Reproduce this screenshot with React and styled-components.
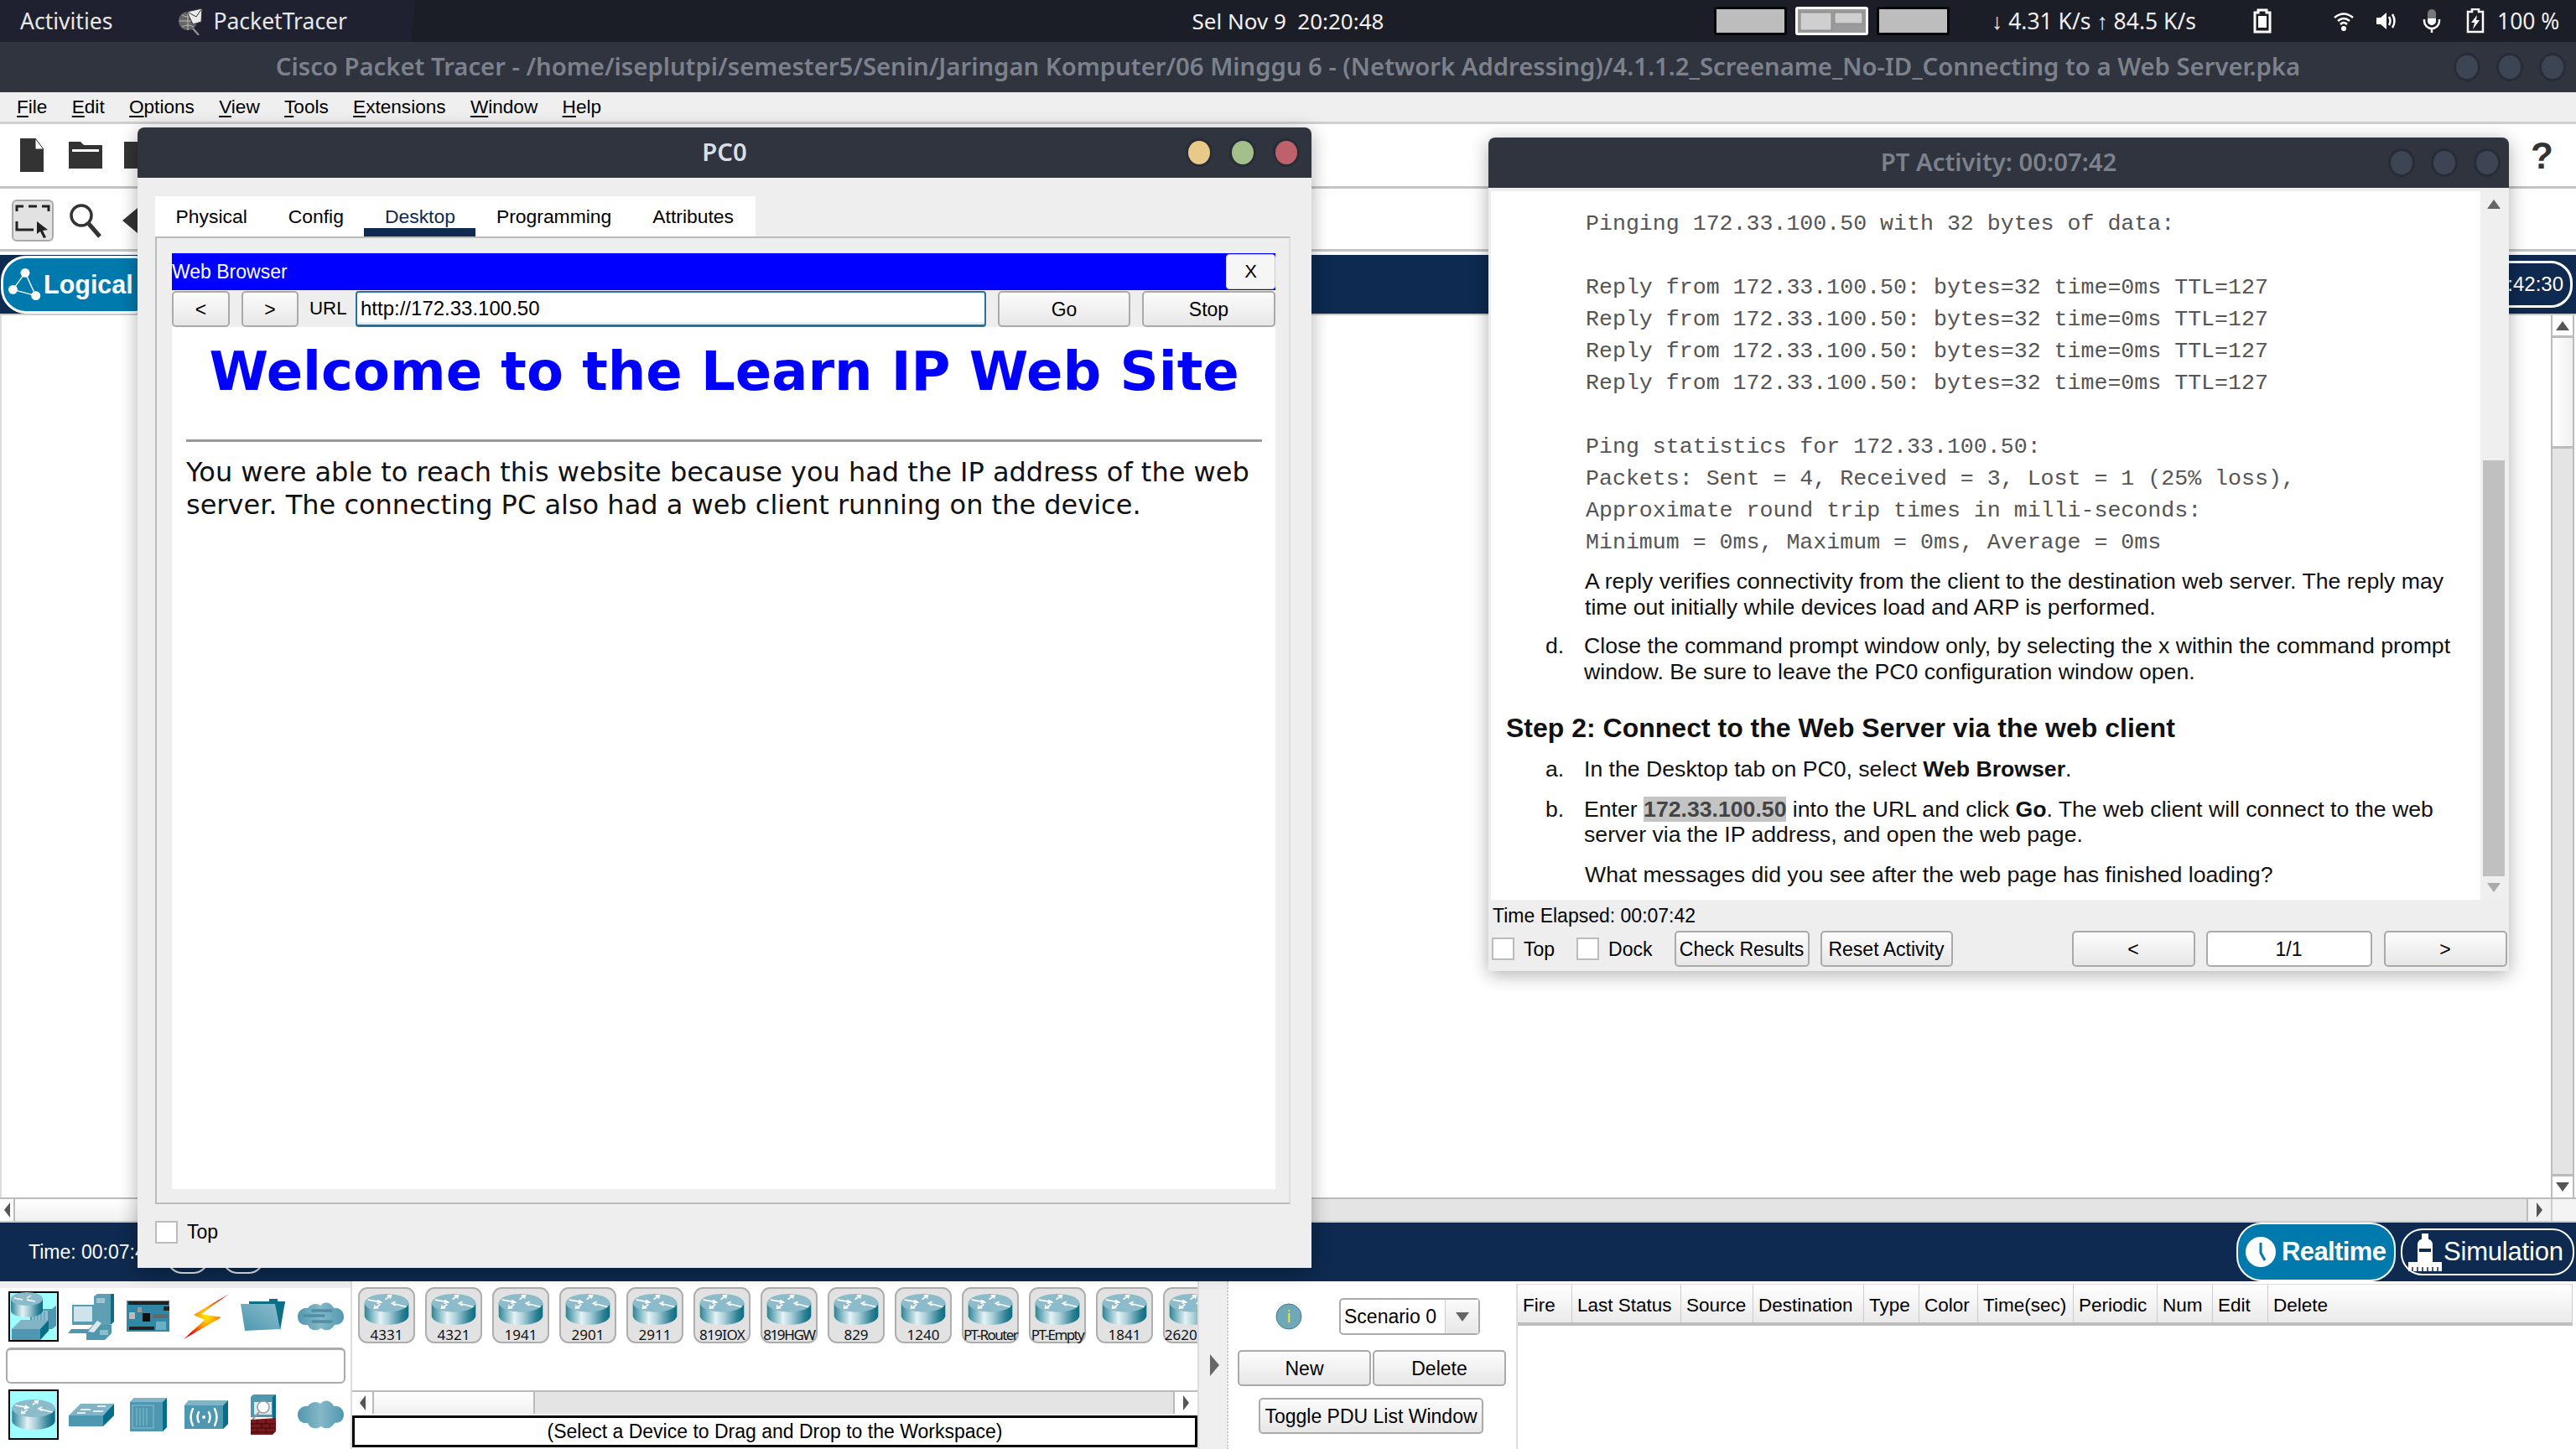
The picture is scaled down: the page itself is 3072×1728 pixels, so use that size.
import React from "react";
import styled, { createGlobalStyle } from "styled-components";

const Global = createGlobalStyle`
  html, body { margin: 0; padding: 0; background: #fff; }
  * { box-sizing: border-box; }
  body { font-family: "Liberation Sans", Arial, sans-serif; color: #000; }
`;

const Page = styled.div`
  position: relative; width: 3072px; height: 1728px; overflow: hidden;
  display: flex; flex-direction: column; background: #fff;
`;
const HiddenSvg = styled.svg`position: absolute; width: 0; height: 0;`;

/* ---------- GNOME top bar ---------- */
const TopBar = styled.div`
  height: 50px; flex: none; display: flex; align-items: center; position: relative;
  background: linear-gradient(97deg, #1f2130 0 492px, #1b1d27 492px);
  color: #e8e8e8; font-family: "Noto Sans", sans-serif; font-size: 26.5px;
`;
const TopLeft = styled.div`display: flex; align-items: center; padding-left: 24px; width: 1000px;`;
const AppName = styled.span`margin-left: 11px;`;
const AppIcon = styled.svg`margin-left: 77px; flex: none;`;
const Clock = styled.div`
  position: absolute; left: 1402px; width: 268px; text-align: center; color: #f2f2f2; white-space: nowrap; font-size: 26px;
`;
const Tray = styled.div`position: absolute; left: 2044px; top: 0; height: 50px; display: flex; align-items: center;`;
const Workspace = styled.div`
  width: 87px; height: 34px; margin-right: 10px; background: #bdbdbd; border: 3px solid ${p => (p.$active ? "#fff" : "#05060a")};
  border-radius: 3px; flex: none; overflow: hidden; display: block;
`;
const Speed = styled.span`margin-left: 40px; width: 311px; white-space: nowrap; color: #eee;`;
const TrayIcon = styled.svg`flex: none; margin-left: ${p => p.$ml || 0}px;`;
const Battery = styled.span`margin-left: 15px; color: #eee; white-space: nowrap;`;

/* ---------- main window chrome ---------- */
const TitleBar = styled.div`
  height: 60px; flex: none; background: #2f343f; position: relative; display: flex; align-items: center; justify-content: center; padding-bottom: 3px;
  font-family: "Noto Sans", sans-serif; font-weight: 600; font-size: 29.3px; color: ${p => p.$color || "#7c818c"};
  letter-spacing: ${p => p.$ls || 0}px; white-space: nowrap;
`;
const WinButtons = styled.div`
  position: absolute; right: ${p => p.$right}px; top: 16px; display: flex; gap: ${p => p.$gap || 25}px;
`;
const WinDot = styled.span`
  width: ${p => p.$w || 26}px; height: 28px; border-radius: 50%; background: ${p => p.$c || "#3d4454"};
  box-shadow: 0 0 0 3px #282c36; display: block;
`;
const MenuBar = styled.div`
  height: 38px; flex: none; background: #efefef; border-bottom: 3px solid #cfcfcf; display: flex; align-items: center;
  gap: 29.3px; padding: 0 0 0 20px; font-size: 22.6px;
  u { text-decoration-thickness: 2px; text-underline-offset: 3px; }
`;
const ToolRow = styled.div`
  height: ${p => p.$h}px; flex: none; background: #fff; border-bottom: 3px solid #c4c4c4; display: flex; align-items: center; position: relative;
  padding-top: ${p => p.$pt || 0}px;
`;
const ToolIcon = styled.svg`flex: none; margin-left: ${p => p.$ml}px;`;
const Help = styled.span`
  position: absolute; right: 27px; top: 13px; font: bold 44px "Liberation Sans", sans-serif; color: #333;
`;
const NavBar = styled.div`
  height: ${p => p.$h}px; flex: none; background: #0e2a50; display: flex; align-items: center; position: relative; margin-top: ${p => p.$mt || 0}px;
`;
const LogicalPill = styled.div`
  width: 190px; height: 69px; margin-left: 1px; border: 3px solid #fff; border-radius: 30px; background: #0079ad; color: #fff;
  font-weight: bold; font-size: 30.5px; display: flex; align-items: center; padding-left: 6px; gap: 2px;
`;
const ViewPill = styled.div`
  margin-left: auto; margin-right: 4px; width: 120px; height: 56px; border: 3px solid #fff; border-radius: 26px; color: #fff;
  font-size: 24px; display: flex; align-items: center; justify-content: flex-end; padding-right: 8px;
`;

/* ---------- canvas ---------- */
const Canvas = styled.div`
  height: 1084px; flex: none; display: flex; flex-direction: column; border-top: 2px solid #ccc; border-bottom: 2px solid #ccc;
`;
const CanvasRow = styled.div`flex: 1; display: flex; min-height: 0; padding-right: 2px;`;
const Work = styled.div`flex: 1; background: #fff; border-left: 2px solid #ddd;`;
const VScroll = styled.div`width: 28px; display: flex; flex-direction: column; border-left: 2px solid #bbb; border-right: 2px solid #bbb; background: #e4e4e4;`;
const ScrollBtn = styled.div`
  width: ${p => p.$w || "auto"}; height: ${p => p.$h || "auto"}; flex: none; display: flex; align-items: center; justify-content: center;
  background: linear-gradient(90deg, #fff, #f2f2f2); color: #555; font-size: 0;
  ${p => p.$line || ""}
`;
const VThumb = styled.div`height: 132px; flex: none; background: linear-gradient(90deg, #fff, #f0f0f0); border-bottom: 3px solid #bbb;`;
const VTrack = styled.div`flex: 1;`;
const HScroll = styled.div`
  height: ${p => p.$h || 28}px; flex: none; display: flex; background: #e4e4e4; border-top: 2px solid #bbb;
`;
const HThumb = styled.div`width: ${p => p.$w}px; flex: none; background: linear-gradient(#fff, #f0f0f0); border-right: 2px solid #bbb;`;
const Grow = styled.div`flex: 1;`;
const Corner = styled.div`width: 30px; flex: none; background: #f4f4f4; border-left: 2px solid #ccc;`;
const Tri = styled.span`
  width: 0; height: 0; display: block;
  ${p => p.$d === "up" && `border-left: 8px solid transparent; border-right: 8px solid transparent; border-bottom: 11px solid ${p.$c || "#555"};`}
  ${p => p.$d === "down" && `border-left: 8px solid transparent; border-right: 8px solid transparent; border-top: 11px solid ${p.$c || "#555"};`}
  ${p => p.$d === "left" && `border-top: 9px solid transparent; border-bottom: 9px solid transparent; border-right: 7px solid ${p.$c || "#555"};`}
  ${p => p.$d === "right" && `border-top: ${p.$s || 9}px solid transparent; border-bottom: ${p.$s || 9}px solid transparent; border-left: ${p.$s ? p.$s * 0.9 : 7}px solid ${p.$c || "#555"};`}
`;
const TimeText = styled.span`margin-left: 34px; color: #fff; font-size: 23px; white-space: nowrap;`;
const SpeedPill = styled.span`
  width: 52px; height: 40px; border: 2px solid #e6e6e6; border-radius: 20px; flex: none; margin-left: ${p => p.$ml}px; margin-top: 12px; display: block;
`;
const ModeGroup = styled.div`position: absolute; left: 2667px; top: 0; height: 100%; display: flex; align-items: center; gap: 6px;`;
const RealtimePill = styled.div`
  width: 190px; height: 70px; border: 2px solid #fff; border-radius: 30px; background: #0079ad; color: #fff; font-weight: bold; font-size: 31px;
  display: flex; align-items: center; padding-left: 8px; gap: 6px; letter-spacing: -.6px;
`;
const SimPill = styled.div`
  width: 207px; height: 56px; border: 2px solid #fff; border-radius: 26px; color: #fff; font-size: 31px;
  display: flex; align-items: center; padding-left: 6px; gap: 1px; letter-spacing: -.2px;
`;

/* ---------- bottom panels ---------- */
const Bottom = styled.div`flex: 1; display: flex; min-height: 0; background: #fff;`;
const LeftPanel = styled.div`
  width: 420px; flex: none; padding: 12px 0 8px; background: linear-gradient(#efefef 0 8px, #fff 8px); display: flex; flex-direction: column; border-right: 2px solid #ddd;
`;
const IconRow = styled.div`display: grid; grid-template-columns: repeat(6, 68.5px); padding-left: 6px; justify-items: center; align-items: center;`;
const Slot = styled.div`
  width: 60px; height: 60px; display: flex; align-items: center; justify-content: center;
  ${p => p.$sel && "background: #9ffeff; border: 2px solid #000;"}
`;
const NameBox = styled.div`height: 43px; margin: 7px 6px 7px 7px; border: 2px solid #aaa; border-top-width: 3px; border-radius: 6px; background: #fff;`;
const Devices = styled.div`width: 1008px; flex: none; display: flex; flex-direction: column; min-width: 0;`;
const TileRow = styled.div`display: flex; gap: 12px; padding: 7px 0 0 7px; overflow: hidden; flex: 1; align-items: flex-start;`;
const Tile = styled.div`
  width: 68px; height: 67px; flex: none; background: #e2e2e2; border: 2px solid #aeaeae; border-radius: 11px; display: flex; flex-direction: column; align-items: center; padding-top: 5px;
`;
const TileLabel = styled.span`
  font: 17px/17px "Noto Sans", sans-serif; color: #111; letter-spacing: ${p => p.$ls || 0}px; white-space: nowrap; margin-top: 2px;
`;
const StatusBox = styled.div`
  height: 38px; margin: 2px 0; border: 3px solid #000; display: flex; align-items: center; justify-content: center; font-size: 23px; background: #fff;
`;
const Splitter = styled.div`
  width: 37px; flex: none; background: #efefef; border-left: 2px solid #ddd; border-right: 2px dotted #ccc; display: flex; align-items: center; padding-left: 13px; margin-right: 0;
`;
const Scenario = styled.div`width: 343px; flex: none; display: flex; flex-direction: column; padding: 20px 0 0 11px;`;
const ScenarioTop = styled.div`display: flex; align-items: center; height: 44px; padding-left: 45px;`;
const ComboBox = styled.div`
  width: 168px; height: 44px; margin-left: 44px; border: 2px solid #aaa; border-radius: 5px; display: flex; font-size: 23px; background: #fff;
`;
const ComboText = styled.span`flex: 1; display: flex; align-items: center; padding-left: 4px; white-space: nowrap;`;
const ComboArrow = styled.span`width: 40px; display: flex; align-items: center; justify-content: center; background: linear-gradient(#fafafa, #e8e8e8); border-left: 1px solid #ccc;`;
const Pair = styled.div`display: flex; gap: 2px; margin-top: 18px;`;
const Btn = styled.div`
  width: ${p => p.$w}px; height: ${p => p.$h || 43}px; flex: none; border: 2px solid #aaa; border-radius: 5px; margin-left: ${p => p.$ml || 0}px; margin-top: ${p => p.$mt || 0}px;
  background: ${p => (p.$plain ? "#fff" : "linear-gradient(#fcfcfc, #e7e7e7)")}; display: flex; align-items: center; justify-content: center; padding-top: 2px;
  font-size: ${p => p.$fs || 23}px; white-space: nowrap; color: #000;
`;
const PduWrap = styled.div`flex: 1; padding: 3px 4px 0 0; min-width: 0;`;
const PduTable = styled.div`height: 100%; border-left: 2px solid #ddd; border-top: 1px solid #ddd;`;
const PduHead = styled.div`
  height: 49px; display: flex; border-bottom: 4px solid #bdbdbd; background: linear-gradient(#fff, #eaeaea); border-right: 1px solid #ccc;
`;
const PduCell = styled.div`
  width: ${p => p.$w}px; flex: ${p => (p.$last ? 1 : "none")}; display: flex; align-items: center; padding: 4px 0 0 6px; border-right: ${p => (p.$last ? 0 : "1px solid #ccc")};
  font-size: 22.5px; white-space: nowrap; overflow: hidden;
`;

/* ---------- PC0 window ---------- */
const FloatWindow = styled.div`
  position: absolute; left: ${p => p.$x}px; top: ${p => p.$y}px; width: ${p => p.$w}px; height: ${p => p.$h}px;
  background: #eee; border-radius: 8px 8px 0 0; box-shadow: 0 4px 22px rgba(0, 0, 0, .32); display: flex; flex-direction: column; overflow: hidden;
`;
const PcBody = styled.div`flex: 1; display: flex; flex-direction: column; padding: 22px 25px 0 21px; min-height: 0;`;
const TabRow = styled.div`width: 716px; height: 48px; flex: none; background: #fff; display: flex;`;
const Tab = styled.div`
  flex: none; padding: 0 24.5px; display: flex; align-items: center; font-size: 22.9px;
  color: ${p => (p.$on ? "#0e2a50" : "#000")}; box-shadow: inset 0 -10px 0 ${p => (p.$on ? "#0e2a50" : "transparent")};
`;
const Pane = styled.div`
  height: 1154px; flex: none; border: 2px solid #bbb; border-right-color: #ddd; border-bottom-color: #bbb; padding: 18px 16px 16px 18px; display: flex; flex-direction: column;
`;
const BlueBar = styled.div`height: 44px; flex: none; background: #00f; color: #fff; font-size: 23px; display: flex; align-items: center; justify-content: space-between;`;
const CloseX = styled.div`
  width: 59px; height: 42px; background: #f6f6f6; border: 1px solid #ccc; border-radius: 4px; color: #000; display: flex; align-items: center; justify-content: center; font-size: 22px;
`;
const UrlRow = styled.div`height: 44px; flex: none; display: flex; align-items: center;`;
const UrlLabel = styled.span`width: 68px; flex: none; padding-left: 13px; font-size: 22.3px;`;
const UrlInput = styled.div`
  width: 752px; height: 43px; flex: none; border: 2px solid #2a6f9e; border-bottom-width: 3px; border-radius: 4px; background: #fff; display: flex; align-items: center; padding-left: 4px;
  font-size: 24px; box-shadow: inset 0 -3px 0 #e2eff6;
`;
const WebView = styled.div`flex: 1; background: #fff; padding: 0 16px 0 17px; min-height: 0;`;
const WebTitle = styled.h1`
  margin: 0; padding-top: 15px; height: 137px; color: #00f; font: bold 64px/1.2 "DejaVu Sans", sans-serif; text-align: center; white-space: nowrap; border-bottom: 3px solid #999;
`;
const WebText = styled.p`margin: 17px 0 0; font: 32px/38.5px "DejaVu Sans", sans-serif; color: #111; white-space: pre-line;`;
const PcFoot = styled.div`display: flex; align-items: center; gap: 11px; padding-top: 20px; font-size: 23px;`;
const Check = styled.span`width: ${p => p.$w || 27}px; height: 27px; flex: none; display: block; background: #fff; border: 2px solid #bbb;`;

/* ---------- activity window ---------- */
const ActBody = styled.div`flex: 1; display: flex; flex-direction: column; padding-top: 4px; min-height: 0;`;
const ActMain = styled.div`height: 845px; flex: none; display: flex; padding-left: 3px;`;
const ActDoc = styled.div`width: 1180px; flex: none; background: #fff; padding: 20px 0 0 18px; overflow: hidden; font-size: 26.65px; line-height: 30.5px; color: #111;`;
const Mono = styled.pre`margin: 0 0 0 95px; font: 26.6px/38px "Liberation Mono", monospace; color: #555;`;
const Para = styled.p`margin: ${p => p.$mt}px 0 0 94px; width: 1060px;`;
const Item = styled.div`display: flex; margin: ${p => p.$mt}px 0 0 47px;`;
const Marker = styled.span`width: 46px; flex: none;`;
const ItemText = styled.div`width: 1065px;`;
const StepTitle = styled.h2`margin: 32px 0 0; font: bold 32px/40px "Liberation Sans", sans-serif; color: #111;`;
const Mark = styled.b`background: #c4c4c4; color: #444;`;
const ActScroll = styled.div`flex: 1; display: flex; flex-direction: column; align-items: center; background: #efefef; padding: 10px 3px 9px 0;`;
const ActThumb = styled.div`width: 26px; height: 496px; margin-top: 300px; background: #c0c0c0;`;
const ActStat = styled.div`height: 37px; flex: none; padding: 2px 0 0 5px; display: flex; align-items: center; font-size: 23px;`;
const ActRow = styled.div`display: flex; align-items: center; padding-left: 4px; font-size: 23px;`;
const Label = styled.span`margin: 2px ${p => p.$mr}px 0 11px;`;

const Arrow = ({ d }) => <path d={d} fill="none" stroke="#fff" strokeWidth="1.8" strokeLinecap="round" />;
const RouterGlyph = ({ w = 58, h = 42 }) => (
  <svg width={w} height={h} viewBox="0 0 60 43">
    <path d="M1 13V30A29 12 0 0 0 59 30V13Z" fill="url(#cyl)" />
    <ellipse cx="30" cy="13" rx="29" ry="12" fill="#8cbccb" />
    <Arrow d="M6 9L23 12M19 9.500L23 12L18 13.500M36 3L29 8M31.500 3.500L36 3L35 6.500M14 20L21 15.500M14.500 16.500L14 20L18.500 19.500M55 18L37 13.500M41 11.500L37 13.500L41 16" />
  </svg>
);
const PcGlyph = () => (
  <svg width="56" height="56" viewBox="0 0 56 56">
    <path d="M31 4L35 1H55V34L50 38L31 38Z" fill="#5e9fb4" /><path d="M51 1H55V34L51 38Z" fill="#0d6d85" /><rect x="34" y="6" width="10" height="6" fill="#9cc4d1" />
    <rect x="5" y="14" width="26" height="24" fill="#5a9db3" /><rect x="7" y="16" width="22" height="18" fill="#cfe3eb" />
    <path d="M0 48L4 43H32L28 48Z" fill="#4f97ae" />
    <path d="M22 56V46L30 38H52V48L44 56Z" fill="#4f97ae" /><path d="M24 46L35 33L40 36L31 47Z" fill="#dceaf0" />
    <path d="M38 44h10v6H38z" fill="#8dbccb" />
  </svg>
);
const BoardGlyph = () => (
  <svg width="52" height="38" viewBox="0 0 52 38">
    <rect width="51" height="37" fill="#2f88a6" /><rect x="2" y="1" width="48" height="4" fill="#222" /><rect x="3" y="31" width="30" height="4" fill="#222" />
    <rect x="19" y="15" width="9" height="10" fill="#111" /><rect x="31" y="16" width="18" height="5" fill="#666" /><rect x="44" y="7" width="7" height="5" fill="#222" />
    <rect x="35" y="25" width="12" height="10" fill="#6db0c6" /><rect x="3" y="14" width="7" height="8" fill="#bbb" /><rect x="13" y="8" width="5" height="6" fill="#999" />
  </svg>
);
const BoltGlyph = () => (
  <svg width="56" height="56" viewBox="0 0 56 56">
    <path d="M55 1L22 25L46 29L1 55L26 32L13 26Z" fill="url(#bolt)" />
  </svg>
);
const FolderGlyph = () => (
  <svg width="54" height="42" viewBox="0 0 54 42">
    <path d="M10 3H34V0H44V3H53L46 34H10Z" fill="#0b6f88" /><path d="M0 6L41 6L47 36L5 38Z" fill="url(#fold)" /><path d="M53 3L47 38L43 8Z" fill="#0b6f88" />
  </svg>
);
const CloudGlyph = ({ lines }) => (
  <svg width="56" height="38" viewBox="0 0 56 38">
    <path d="M12 9C16 3 24 3 27 6C32 0 40 2 43 9C50 8 55 13 55 19C55 26 50 29 44 29C40 36 33 37 28 33C22 37 15 36 12 29C5 30 0 26 0 19C0 13 6 8 12 9Z" fill="url(#cloud)" />
    {lines && <path d="M18 12H40M8 18H31M18 25H40" stroke="#4f8ea6" strokeWidth="3.500" strokeLinecap="round" />}
  </svg>
);
const SwitchGlyph = () => (
  <svg width="54" height="28" viewBox="0 0 54 28">
    <path d="M0 15L14 1H54L41 15Z" fill="#82b4c5" /><rect y="15" width="41" height="13" fill="#4d97b0" /><path d="M41 15L54 1V15L41 28Z" fill="#066e88" />
    <path d="M14 8H26M34 4H44M10 12H20M29 10H41" stroke="#fff" strokeWidth="1.300" />
  </svg>
);
const CombinedGlyph = () => (
  <svg width="56" height="58" viewBox="0 0 56 58">
    <path d="M24 20H50L55 16V40L50 44H24Z" fill="#4d97b0" /><rect x="26" y="22" width="19" height="20" fill="#8fbecd" />
    <path d="M29 23V41M33 23V41M37 23V41M41 23V41" stroke="#4d97b0" />
    <path d="M1 8V22A19 8 0 0 0 39 22V8Z" fill="url(#cyl)" /><ellipse cx="20" cy="8" rx="19" ry="8" fill="#8cbccb" />
    <path d="M5 7L15 9M25 4L20 7M30 11L20 9" stroke="#fff" strokeWidth="1.400" />
    <path d="M2 44L13 33H46L36 44Z" fill="#82b4c5" /><rect x="2" y="44" width="34" height="13" fill="#4d97b0" /><path d="M36 44L46 33V46L36 57Z" fill="#066e88" />
  </svg>
);
const HubGlyph = () => (
  <svg width="44" height="40" viewBox="0 0 44 40">
    <path d="M0 5L5 0H44V35L39 40H0Z" fill="#4d97b0" /><path d="M39 5L44 0V35L39 40Z" fill="#066e88" /><path d="M0 5L5 0H44L39 5Z" fill="#82b4c5" />
    <rect x="3" y="9" width="25" height="27" fill="none" stroke="#8fbecd" /><path d="M8 12V33M12 12V33M16 12V33M20 12V33" stroke="#8fbecd" />
  </svg>
);
const WirelessGlyph = () => (
  <svg width="52" height="34" viewBox="0 0 52 34">
    <path d="M0 6L5 0H52V28L46 34H0Z" fill="#4d97b0" /><path d="M46 6L52 0V28L46 34Z" fill="#066e88" /><path d="M0 6L5 0H52L46 6Z" fill="#82b4c5" />
    <circle cx="23" cy="20" r="2" fill="#fff" />
    <path d="M17 14Q14 20 17 26M29 14Q32 20 29 26M10 10Q5 20 10 30M36 10Q41 20 36 30" stroke="#fff" strokeWidth="2.500" fill="none" strokeLinecap="round" />
  </svg>
);
const FirewallGlyph = () => (
  <svg width="30" height="48" viewBox="0 0 30 48">
    <path d="M0 3L3 0H30V27H0Z" fill="#4d97b0" /><path d="M26 3L30 0V30L26 30Z" fill="#066e88" />
    <rect x="4" y="9" width="21" height="15" fill="#dceaf0" /><circle cx="15" cy="15" r="7" fill="#fff" stroke="#999" strokeWidth="1.500" /><path d="M10 21L2 30" stroke="#999" strokeWidth="2" />
    <path d="M0 30L30 28V44L26 48H0Z" fill="#7a1a1e" /><path d="M0 35H30M0 40H30M0 45H28M8 30V35M18 30V35M13 35V40M23 35V40M8 40V45M18 40V45" stroke="#3a0a0c" />
  </svg>
);

const tiles = [["4331"], ["4321"], ["1941"], ["2901"], ["2911"], ["819IOX", -.6], ["819HGW", -1.4], ["829"], ["1240"], ["PT-Router", -1.6], ["PT-Empty", -1.6], ["1841"], ["2620XM"]];
const pduCols = [["Fire", 65], ["Last Status", 130], ["Source", 86], ["Destination", 132], ["Type", 66], ["Color", 70], ["Time(sec)", 114], ["Periodic", 100], ["Num", 66], ["Edit", 66], ["Delete", 0]];
const monoText = `Pinging 172.33.100.50 with 32 bytes of data:

Reply from 172.33.100.50: bytes=32 time=0ms TTL=127
Reply from 172.33.100.50: bytes=32 time=0ms TTL=127
Reply from 172.33.100.50: bytes=32 time=0ms TTL=127
Reply from 172.33.100.50: bytes=32 time=0ms TTL=127

Ping statistics for 172.33.100.50:
Packets: Sent = 4, Received = 3, Lost = 1 (25% loss),
Approximate round trip times in milli-seconds:
Minimum = 0ms, Maximum = 0ms, Average = 0ms`;

export default function App() {
  return (
    <Page>
      <Global />
      <HiddenSvg>
        <defs>
          <linearGradient id="cyl" x1="0" x2="1" y1="0" y2="0">
            <stop offset="0" stopColor="#2f8195" /><stop offset=".12" stopColor="#6aaab9" /><stop offset=".36" stopColor="#e6f2f5" />
            <stop offset=".55" stopColor="#a9cfd9" /><stop offset=".85" stopColor="#2f8295" /><stop offset="1" stopColor="#0d6b82" />
          </linearGradient>
          <radialGradient id="bolt" cx=".5" cy=".5" r=".5">
            <stop offset="0" stopColor="#ffee00" /><stop offset=".45" stopColor="#ff9a00" /><stop offset="1" stopColor="#f00000" />
          </radialGradient>
          <linearGradient id="fold" x1="0" x2="1" y1="1" y2="0"><stop offset="0" stopColor="#4d97b0" /><stop offset="1" stopColor="#8bbccb" /></linearGradient>
          <linearGradient id="cloud" x1="0" x2="1"><stop offset="0" stopColor="#4f98b0" /><stop offset=".5" stopColor="#86b8c8" /><stop offset="1" stopColor="#4f98b0" /></linearGradient>
        </defs>
      </HiddenSvg>

      <TopBar>
        <TopLeft>
          <span>Activities</span>
          <AppIcon width="32" height="34" viewBox="0 0 32 34">
            <circle cx="13" cy="17" r="11" fill="#666" /><path d="M3 17H23M13 6V28M6 10Q13 14 20 10M6 24Q13 20 20 24" stroke="#bbb" strokeWidth="1" fill="none" />
            <path d="M12 6L30 2L29 18L19 21Z" fill="#e8e8e8" stroke="#333" /><path d="M12 6L23 12L30 2" fill="none" stroke="#333" />
            <path d="M19 26L26 34" stroke="#999" strokeWidth="2" />
          </AppIcon>
          <AppName>PacketTracer</AppName>
        </TopLeft>
        <Clock>Sel Nov 9&nbsp; 20:20:48</Clock>
        <Tray>
          <Workspace />
          <Workspace $active>
            <svg width="81" height="28" viewBox="0 0 81 28">
              <rect width="81" height="28" fill="#9a9a9a" /><rect x="3" y="4" width="37" height="21" fill="#cfcfcf" stroke="#8a8a8a" /><rect x="44" y="4" width="33" height="13" fill="#cfcfcf" stroke="#8a8a8a" />
            </svg>
          </Workspace>
          <Workspace />
          <Speed>↓ 4.31 K/s ↑ 84.5 K/s</Speed>
          <TrayIcon width="24" height="30" viewBox="0 0 24 30">
            <path d="M3 5H7V2H17V5H21V28H3Z" fill="none" stroke="#fff" strokeWidth="3" /><rect x="7" y="9" width="10" height="14" fill="#fff" />
          </TrayIcon>
          <TrayIcon $ml={72} width="26" height="26" viewBox="0 0 26 26">
            <path d="M2 9Q13 0 24 9M6 13Q13 7 20 13M9 17Q13 13 17 17" fill="none" stroke="#fff" strokeWidth="2.500" /><circle cx="13" cy="22" r="3" fill="#fff" />
          </TrayIcon>
          <TrayIcon $ml={25} width="27" height="26" viewBox="0 0 27 26">
            <path d="M1 9H6L13 3V23L6 17H1Z" fill="#fff" /><path d="M16 8Q19 13 16 18M20 5Q25 13 20 21" fill="none" stroke="#fff" strokeWidth="2.500" />
          </TrayIcon>
          <TrayIcon $ml={29} width="22" height="30" viewBox="0 0 22 30">
            <rect x="6" y="1" width="10" height="19" rx="5" fill="#777" /><path d="M6 12H16V15A5 5 0 0 1 6 15Z" fill="#fff" /><path d="M2 13V15A9 9 0 0 0 20 15V13M11 24V29" fill="none" stroke="#fff" strokeWidth="2.500" />
          </TrayIcon>
          <TrayIcon $ml={30} width="22" height="30" viewBox="0 0 22 30">
            <path d="M2 4H7V1H15V4H20V28H2Z" fill="none" stroke="#fff" strokeWidth="2.500" /><path d="M13 8L6 17H10L8 25L16 14H12Z" fill="#fff" />
          </TrayIcon>
          <Battery>100 %</Battery>
        </Tray>
      </TopBar>

      <TitleBar $ls={-0.03}>
        Cisco Packet Tracer - /home/iseplutpi/semester5/Senin/Jaringan Komputer/06 Minggu 6 - (Network Addressing)/4.1.1.2_Screename_No-ID_Connecting to a Web Server.pka
        <WinButtons $right={15}><WinDot /><WinDot /><WinDot /></WinButtons>
      </TitleBar>

      <MenuBar>
        <span><u>F</u>ile</span><span><u>E</u>dit</span><span><u>O</u>ptions</span><span><u>V</u>iew</span><span><u>T</u>ools</span><span><u>E</u>xtensions</span><span><u>W</u>indow</span><span><u>H</u>elp</span>
      </MenuBar>

      <ToolRow $h={77}>
        <ToolIcon $ml={24} width="28" height="40" viewBox="0 0 28 40"><path d="M0 0H18L28 13V40H0Z" fill="#333" /><path d="M18 0V13H28Z" fill="#fff" stroke="#333" /></ToolIcon>
        <ToolIcon $ml={30} width="40" height="32" viewBox="0 0 40 32"><path d="M0 0H14L18 4H40V32H0Z" fill="#333" /><rect x="4" y="9" width="32" height="3" fill="#fff" /></ToolIcon>
        <ToolIcon $ml={26} width="30" height="32" viewBox="0 0 30 32"><path d="M0 0H24L30 6V32H0Z" fill="#333" /></ToolIcon>
        <Help>?</Help>
      </ToolRow>
      <ToolRow $h={75} $pt={4}>
        <ToolIcon $ml={14} width="50" height="50" viewBox="0 0 50 50">
          <rect x="1" y="1" width="48" height="48" rx="5" fill="#e2e2e2" stroke="#aaa" strokeWidth="2" />
          <path d="M6 14V8H14M20 8H30M36 8H44V14M6 26V36H26M6 36V34" fill="none" stroke="#222" strokeWidth="3" /><path d="M30 26L43 36L37 37L41 45L38 46L34 38L30 41Z" fill="#222" />
        </ToolIcon>
        <ToolIcon $ml={18} width="40" height="42" viewBox="0 0 40 42"><circle cx="15" cy="15" r="12" fill="none" stroke="#333" strokeWidth="3.500" /><path d="M24 25L37 40" stroke="#333" strokeWidth="5" /></ToolIcon>
        <ToolIcon $ml={24} width="20" height="30" viewBox="0 0 20 30"><path d="M0 15L18 0V30Z" fill="#333" /></ToolIcon>
      </ToolRow>

      <NavBar $h={70} $mt={4}>
        <LogicalPill>
          <svg width="40" height="48" viewBox="0 0 44 50">
            <path d="M22 10L6 32L36 40" stroke="#fff" strokeWidth="1.500" fill="none" /><path d="M22 10L36 40" stroke="#fff" strokeWidth="1.500" />
            <circle cx="22" cy="10" r="6" fill="#fff" /><circle cx="6" cy="32" r="6" fill="#fff" /><circle cx="36" cy="40" r="6" fill="#fff" />
          </svg>
          Logical
        </LogicalPill>
        <ViewPill>:42:30</ViewPill>
      </NavBar>

      <Canvas>
        <CanvasRow>
          <Work />
          <VScroll>
            <ScrollBtn $h="27px" $line="background:#fff;border-bottom:3px solid #bbb;"><Tri $d="up" /></ScrollBtn>
            <VThumb />
            <VTrack />
            <ScrollBtn $h="28px" $line="background:#fff;border-top:3px solid #bbb;"><Tri $d="down" /></ScrollBtn>
          </VScroll>
        </CanvasRow>
        <HScroll>
          <ScrollBtn $w="18px" $line="border-right:2px solid #bbb;background:#fff;"><Tri $d="left" /></ScrollBtn>
          <HThumb $w={300} />
          <Grow />
          <ScrollBtn $w="29px" $line="border-left:2px solid #bbb;background:#f2f2f2;"><Tri $d="right" /></ScrollBtn>
          <Corner />
        </HScroll>
      </Canvas>

      <NavBar $h={70}>
        <TimeText>Time: 00:07:42</TimeText>
        <SpeedPill $ml={11} />
        <SpeedPill $ml={14} />
        <ModeGroup>
          <RealtimePill>
            <svg width="38" height="38" viewBox="0 0 38 38"><circle cx="19" cy="19" r="18" fill="#fff" /><path d="M19 8V20L24 29" fill="none" stroke="#0079ad" strokeWidth="3" /></svg>
            Realtime
          </RealtimePill>
          <SimPill>
            <svg width="42" height="48" viewBox="0 0 42 48">
              <path d="M12 36V16Q12 8 21 8Q30 8 30 16V36Z" fill="#fff" /><rect x="17" y="2" width="8" height="7" fill="#fff" /><rect x="14" y="20" width="14" height="4" fill="#0e2a50" />
              <rect x="1" y="36" width="40" height="11" fill="#fff" /><path d="M6 42V47M12 42V47M18 42V47M24 42V47M30 42V47M36 42V47" stroke="#0e2a50" strokeWidth="1.500" />
            </svg>
            Simulation
          </SimPill>
        </ModeGroup>
      </NavBar>

      <Bottom>
        <LeftPanel>
          <IconRow>
            <Slot $sel><CombinedGlyph /></Slot><Slot><PcGlyph /></Slot><Slot><BoardGlyph /></Slot><Slot><BoltGlyph /></Slot><Slot><FolderGlyph /></Slot><Slot><CloudGlyph lines /></Slot>
          </IconRow>
          <NameBox />
          <IconRow>
            <Slot $sel><RouterGlyph w={54} h={38} /></Slot><Slot><SwitchGlyph /></Slot><Slot><HubGlyph /></Slot><Slot><WirelessGlyph /></Slot><Slot><FirewallGlyph /></Slot><Slot><CloudGlyph /></Slot>
          </IconRow>
        </LeftPanel>
        <Devices>
          <TileRow>
            {tiles.map(([n, ls]) => (
              <Tile key={n}><RouterGlyph /><TileLabel $ls={ls}>{n}</TileLabel></Tile>
            ))}
          </TileRow>
          <HScroll>
            <ScrollBtn $w="26px" $line="border-right:2px solid #bbb;background:#fff;"><Tri $d="left" /></ScrollBtn>
            <HThumb $w={192} />
            <Grow />
            <ScrollBtn $w="29px" $line="border-left:2px solid #bbb;background:#fff;"><Tri $d="right" /></ScrollBtn>
          </HScroll>
          <StatusBox>(Select a Device to Drag and Drop to the Workspace)</StatusBox>
        </Devices>
        <Splitter><Tri $d="right" $s={13} $c="#666" /></Splitter>
        <Scenario>
          <ScenarioTop>
            <svg width="32" height="32" viewBox="0 0 32 32"><circle cx="16" cy="16" r="15" fill="#6fa9b8" stroke="#3d7f90" /><text x="16" y="23" textAnchor="middle" fontSize="20" fontFamily="Liberation Sans" fill="#f3e23a">i</text></svg>
            <ComboBox>
              <ComboText>Scenario 0</ComboText>
              <ComboArrow><Tri $d="down" $c="#666" /></ComboArrow>
            </ComboBox>
          </ScenarioTop>
          <Pair>
            <Btn $w={159}>New</Btn>
            <Btn $w={159}>Delete</Btn>
          </Pair>
          <Btn $w={268} $ml={25} $mt={14}>Toggle PDU List Window</Btn>
        </Scenario>
        <PduWrap>
          <PduTable>
            <PduHead>
              {pduCols.map(([n, w]) => <PduCell key={n} $w={w} $last={!w}>{n}</PduCell>)}
            </PduHead>
          </PduTable>
        </PduWrap>
      </Bottom>

      <FloatWindow $x={164} $y={152} $w={1400} $h={1360}>
        <TitleBar $color="#d8dee9">
          PC0
          <WinButtons $right={17} $gap={26}><WinDot $c="#e8c98a" /><WinDot $c="#a3bf8c" /><WinDot $c="#bf616a" /></WinButtons>
        </TitleBar>
        <PcBody>
          <TabRow>
            <Tab>Physical</Tab><Tab>Config</Tab><Tab $on>Desktop</Tab><Tab>Programming</Tab><Tab>Attributes</Tab>
          </TabRow>
          <Pane>
            <BlueBar>Web Browser<CloseX>X</CloseX></BlueBar>
            <UrlRow>
              <Btn $w={69}>&lt;</Btn>
              <Btn $w={68} $ml={14}>&gt;</Btn>
              <UrlLabel>URL</UrlLabel>
              <UrlInput>http://172.33.100.50</UrlInput>
              <Btn $w={158} $ml={14}>Go</Btn>
              <Btn $w={159} $ml={14}>Stop</Btn>
            </UrlRow>
            <WebView>
              <WebTitle>Welcome to the Learn IP Web Site</WebTitle>
              <WebText>{"You were able to reach this website because you had the IP address of the web\nserver. The connecting PC also had a web client running on the device."}</WebText>
            </WebView>
          </Pane>
          <PcFoot><Check />Top</PcFoot>
        </PcBody>
      </FloatWindow>

      <FloatWindow $x={1775} $y={164} $w={1217} $h={994}>
        <TitleBar $color="#7c818c">
          PT Activity: 00:07:42
          <WinButtons $right={13}><WinDot /><WinDot /><WinDot /></WinButtons>
        </TitleBar>
        <ActBody>
          <ActMain>
            <ActDoc>
              <Mono>{monoText}</Mono>
              <Para $mt={12}>A reply verifies connectivity from the client to the destination web server. The reply may time out initially while devices load and ARP is performed.</Para>
              <Item $mt={16}><Marker>d.</Marker><ItemText>Close the command prompt window only, by selecting the x within the command prompt window. Be sure to leave the PC0 configuration window open.</ItemText></Item>
              <StepTitle>Step 2: Connect to the Web Server via the web client</StepTitle>
              <Item $mt={14}><Marker>a.</Marker><ItemText>In the Desktop tab on PC0, select <b>Web Browser</b>.</ItemText></Item>
              <Item $mt={17}><Marker>b.</Marker><ItemText>Enter <Mark>172.33.100.50</Mark> into the URL and click <b>Go</b>. The web client will connect to the web server via the IP address, and open the web page.</ItemText></Item>
              <Para $mt={17}>What messages did you see after the web page has finished loading?</Para>
            </ActDoc>
            <ActScroll>
              <Tri $d="up" $c="#666" />
              <ActThumb />
              <Grow />
              <Tri $d="down" $c="#aaa" />
            </ActScroll>
          </ActMain>
          <ActStat>Time Elapsed: 00:07:42</ActStat>
          <ActRow>
            <Check />
            <Label $mr={26}>Top</Label>
            <Check />
            <Label $mr={26}>Dock</Label>
            <Btn $w={161}>Check Results</Btn>
            <Btn $w={158} $ml={13}>Reset Activity</Btn>
            <Btn $w={147} $ml={142}>&lt;</Btn>
            <Btn $w={198} $ml={13} $plain>1/1</Btn>
            <Btn $w={147} $ml={14}>&gt;</Btn>
          </ActRow>
        </ActBody>
      </FloatWindow>
    </Page>
  );
}
